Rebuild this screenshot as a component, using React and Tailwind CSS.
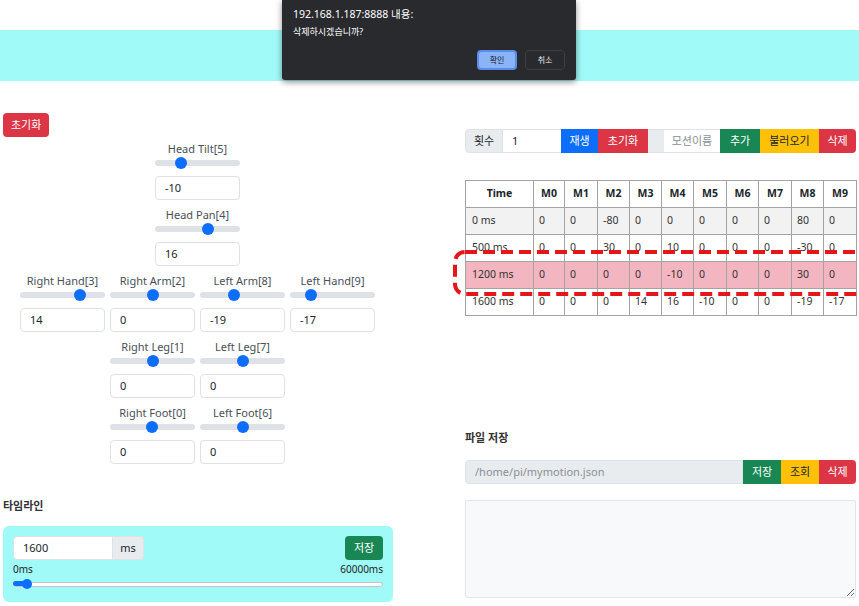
import React from 'react';

const font = { fontFamily: '"Noto Sans", "Noto Sans CJK KR", sans-serif' };

const Slider = ({ pos }) => (
  <div className="relative h-[14px] flex items-center">
    <div className="w-full h-[6px] rounded-full bg-[#dee2e6]" />
    <div
      className="absolute top-[1px] w-[12px] h-[12px] rounded-full bg-[#0d6efd]"
      style={{ left: pos - 6 }}
    />
  </div>
);

const Box = ({ value, className = '' }) => (
  <div className={`h-[24px] border border-[#dee2e6] rounded-[4px] px-[9px] flex items-center text-[11px] text-[#212529] bg-white ${className}`}>
    {value}
  </div>
);

const Joint = ({ label, pos, value }) => (
  <div className="w-[85px] mb-[8px]">
    <div className="h-[14px] leading-[14px] text-center text-[11px] text-[#495057] whitespace-nowrap">{label}</div>
    <Slider pos={pos} />
    <Box value={value} className="mt-[6px]" />
  </div>
);

const rows = [
  { t: '0 ms', v: [0, 0, -80, 0, 0, 0, 0, 0, 80, 0], bg: 'bg-[#f2f2f2]' },
  { t: '500 ms', v: [0, 0, 30, 0, 10, 0, 0, 0, -30, 0], bg: 'bg-white' },
  { t: '1200 ms', v: [0, 0, 0, 0, -10, 0, 0, 0, 30, 0], bg: 'bg-[#f3b6c1]' },
  { t: '1600 ms', v: [0, 0, 0, 14, 16, -10, 0, 0, -19, -17], bg: 'bg-white' },
];
const colW = [68, 31, 33, 32, 32, 32, 33, 32, 33, 32, 33];

const Btn = ({ children, className = '' }) => (
  <div className={`h-[24px] flex items-center justify-center text-[11px] ${className}`}>{children}</div>
);

export default function App() {
  return (
    <div className="relative w-[859px] h-[606px] overflow-hidden bg-white text-[#212529]" style={font}>
      <div className="h-[30px]" />
      <div className="h-[51px] bg-[#a0faf8]" />

      <div className="flex items-start">
        {/* left column */}
        <div className="w-[465px] pl-[3px]">
          <button className="mt-[32px] h-[24px] px-[8px] rounded-[4px] bg-[#dc3545] text-white text-[11px]">초기화</button>
          <div className="ml-[17px] w-[355px] mt-[5px]">
            <div className="flex justify-center gap-[5px]">
              <Joint label="Head Tilt[5]" pos={26} value="-10" />
            </div>
            <div className="flex justify-center gap-[5px]">
              <Joint label="Head Pan[4]" pos={53} value="16" />
            </div>
            <div className="flex justify-center gap-[5px]">
              <Joint label="Right Hand[3]" pos={60} value="14" />
              <Joint label="Right Arm[2]" pos={43} value="0" />
              <Joint label="Left Arm[8]" pos={34} value="-19" />
              <Joint label="Left Hand[9]" pos={21} value="-17" />
            </div>
            <div className="flex justify-center gap-[5px]">
              <Joint label="Right Leg[1]" pos={43} value="0" />
              <Joint label="Left Leg[7]" pos={43} value="0" />
            </div>
            <div className="flex justify-center gap-[5px]">
              <Joint label="Right Foot[0]" pos={42} value="0" />
              <Joint label="Left Foot[6]" pos={43} value="0" />
            </div>
          </div>

          <div className="mt-[27px] h-[14px] leading-[14px] text-[11px] font-bold text-[#333]">타임라인</div>
          <div className="mt-[13px] w-[390px] h-[76px] rounded-[6px] bg-[#a0faf8] px-[10px] pt-[10px]">
            <div className="flex justify-between">
              <div className="flex">
                <div className="w-[100px] h-[24px] bg-white border border-[#dee2e6] rounded-l-[4px] px-[9px] flex items-center text-[11px]">1600</div>
                <div className="w-[31px] h-[24px] bg-[#e9ecef] border border-l-0 border-[#dee2e6] rounded-r-[4px] flex items-center justify-center text-[11px]">ms</div>
              </div>
              <Btn className="w-[38px] rounded-[4px] bg-[#198754] text-white">저장</Btn>
            </div>
            <div className="mt-[2px] flex justify-between text-[10px] leading-[14px]">
              <span>0ms</span>
              <span>60000ms</span>
            </div>
            <div className="relative mt-[2px] h-[12px] flex items-center">
              <div className="w-full h-[5px] rounded-full bg-white border border-[#c4c4c4]" />
              <div className="absolute left-0 top-[3px] w-[14px] h-[5px] rounded-l-full bg-[#0d6efd]" />
              <div className="absolute left-[9px] top-[1px] w-[10px] h-[10px] rounded-full bg-[#0d6efd]" />
            </div>
          </div>
        </div>

        {/* right column */}
        <div className="w-[391px]">
          <div className="mt-[48px] flex h-[24px] text-[11px]">
            <Btn className="w-[38px] bg-[#e9ecef] border border-[#dee2e6] rounded-l-[4px]">횟수</Btn>
            <div className="w-[58px] h-[24px] border-y border-[#dee2e6] bg-white flex items-center px-[9px]">1</div>
            <Btn className="w-[37px] bg-[#0d6efd] text-white">재생</Btn>
            <Btn className="w-[50px] bg-[#dc3545] text-white">초기화</Btn>
            <div className="w-[16px] h-[24px] bg-[#e9ecef] border-y border-[#dee2e6]" />
            <div className="w-[56px] h-[24px] border-y border-[#dee2e6] bg-white flex items-center justify-center text-[#8a8f94]">모션이름</div>
            <Btn className="w-[40px] bg-[#198754] text-white">추가</Btn>
            <Btn className="w-[59px] bg-[#ffc107] text-[#212529]">불러오기</Btn>
            <Btn className="w-[37px] bg-[#dc3545] text-white rounded-r-[4px]">삭제</Btn>
          </div>

          <table className="mt-[27px] w-[391px] table-fixed border-collapse text-[10.5px]">
            <colgroup>
              {colW.map((w, i) => (
                <col key={i} style={{ width: w }} />
              ))}
            </colgroup>
            <thead>
              <tr className="h-[27px] bg-white">
                {['Time', 'M0', 'M1', 'M2', 'M3', 'M4', 'M5', 'M6', 'M7', 'M8', 'M9'].map((h) => (
                  <th key={h} className="border border-[#a3a3a3] font-bold text-center p-0">{h}</th>
                ))}
              </tr>
            </thead>
            <tbody>
              {rows.map((r) => (
                <tr key={r.t} className={`h-[27px] ${r.bg}`}>
                  <td className="border border-[#a3a3a3] pl-[6px] text-[#333]">{r.t}</td>
                  {r.v.map((v, i) => (
                    <td key={i} className="border border-[#a3a3a3] pl-[5px] text-[#333]">{v}</td>
                  ))}
                </tr>
              ))}
            </tbody>
          </table>

          <div className="mt-[115px] h-[14px] leading-[14px] text-[11px] font-bold text-[#333]">파일 저장</div>
          <div className="mt-[15px] flex h-[24px] text-[11px]">
            <div className="w-[278px] h-[24px] bg-[#e9ecef] border border-[#dee2e6] rounded-l-[4px] flex items-center px-[9px] text-[#8a8f94]">/home/pi/mymotion.json</div>
            <Btn className="w-[38px] bg-[#198754] text-white">저장</Btn>
            <Btn className="w-[38px] bg-[#ffc107] text-[#212529]">조회</Btn>
            <Btn className="w-[37px] bg-[#dc3545] text-white rounded-r-[4px]">삭제</Btn>
          </div>
          <textarea
            readOnly
            className="mt-[16px] block w-[391px] h-[98px] bg-[#f8f9fa] border border-[#e3e5e8] rounded-[2px]"
          />
        </div>
      </div>

      {/* highlight */}
      <svg className="absolute left-[453px] top-[250px]" width="420" height="46">
        <rect x="2" y="2" width="414" height="42" rx="10" fill="none" stroke="#e3161b" strokeWidth="4" strokeDasharray="12 6" />
      </svg>

      {/* alert dialog */}
      <div className="absolute left-[282px] top-0 w-[294px] h-[80px] bg-[#292a2d] rounded-b-[3px] shadow-[0_2px_6px_rgba(0,0,0,0.45)] text-white">
        <div className="absolute left-[11px] top-[7px] text-[10.5px] leading-[14px]">192.168.1.187:8888 내용:</div>
        <div className="absolute left-[11px] top-[26px] text-[9px] leading-[12px]">삭제하시겠습니까?</div>
        <div className="absolute left-[195px] top-[50px] w-[40px] h-[20px] rounded-[4px] bg-[#8ab4f8] border-2 border-[#5b8de8] flex items-center justify-center text-[8px] text-[#202124]">확인</div>
        <div className="absolute left-[243px] top-[50px] w-[40px] h-[20px] rounded-[4px] border border-[#3c4043] flex items-center justify-center text-[8px] text-[#e8eaed]">취소</div>
      </div>
    </div>
  );
}
